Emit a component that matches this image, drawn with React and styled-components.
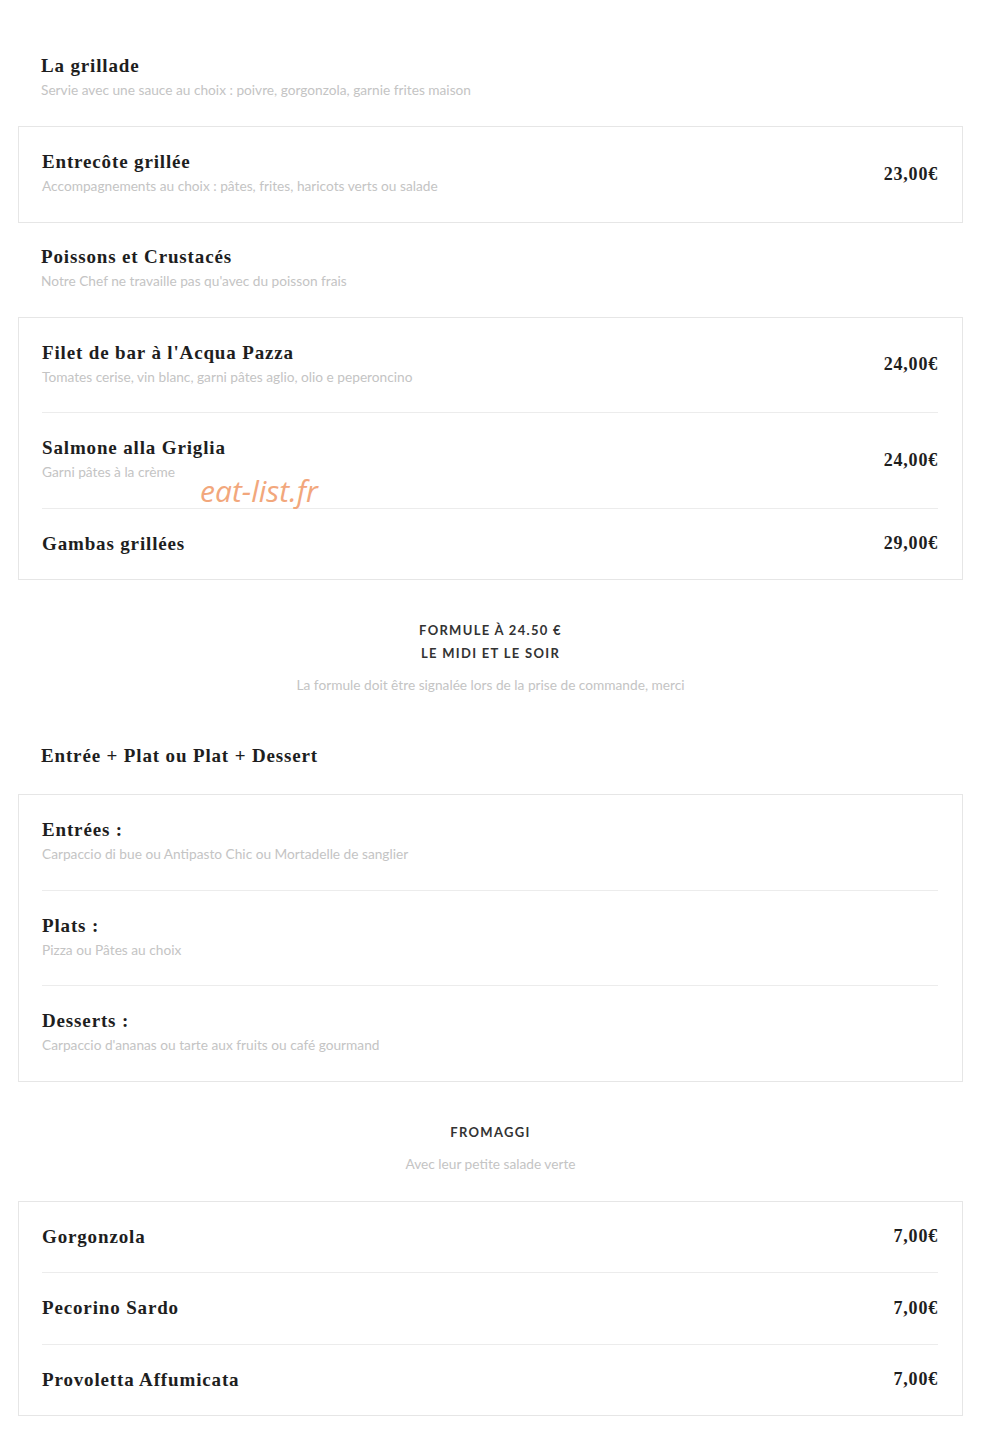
import React from "react";
import styled, { createGlobalStyle } from "styled-components";

const GlobalStyle = createGlobalStyle`
  body {
    margin: 0;
    background: #ffffff;
    font-family: "Lato", "Open Sans", sans-serif;
  }
`;

const Page = styled.div`
  position: relative;
  width: 945px;
  margin: 0 0 0 18px;
  padding: 32px 0 17px;
`;

const SectionHead = styled.div`
  padding: 22px 23px ${(p) => (p.$last ? "26px" : "24px")};
`;

const Title = styled.h3`
  margin: 0;
  font-family: "Liberation Serif", "DejaVu Serif", serif;
  font-weight: 700;
  font-size: 19px;
  line-height: 24px;
  letter-spacing: 0.85px;
  color: #1e1e1e;
`;

const Desc = styled.p`
  margin: 0;
  font-family: "Lato", "Open Sans", sans-serif;
  font-weight: 400;
  font-size: 13.7px;
  line-height: 24px;
  color: #c4c4c4;
`;

const Card = styled.div`
  background: #ffffff;
  border: 1px solid #e6e6e6;
  padding: 0 24px 0 23px;
`;

const Row = styled.div`
  display: flex;
  align-items: center;
  justify-content: space-between;
  padding: 23.25px 0;
  & + & {
    border-top: 1px solid #ececec;
  }
`;

const Price = styled.span`
  font-family: "Liberation Serif", "DejaVu Serif", serif;
  font-weight: 700;
  font-size: 18px;
  letter-spacing: 0.8px;
  color: #1e1e1e;
`;

const Banner = styled.div`
  text-align: center;
  padding: 39px 0 25px;
`;

const BannerLine = styled.div`
  font-family: "Lato", "Open Sans", sans-serif;
  font-weight: 700;
  font-size: 13px;
  line-height: 23px;
  letter-spacing: 1.3px;
  color: #333333;
`;

const BannerNote = styled(Desc)`
  margin-top: 8px;
`;

const Watermark = styled.span`
  position: absolute;
  left: 182px;
  top: 470px;
  font-family: "Open Sans", sans-serif;
  font-style: italic;
  font-size: 30px;
  color: #f2a77c;
`;

function Item({ name, desc, price }) {
  return (
    <Row>
      <div>
        <Title>{name}</Title>
        {desc && <Desc>{desc}</Desc>}
      </div>
      {price && <Price>{price}</Price>}
    </Row>
  );
}

function Head({ title, desc }) {
  return (
    <SectionHead $last={!desc}>
      <Title>{title}</Title>
      {desc && <Desc>{desc}</Desc>}
    </SectionHead>
  );
}

export default function App() {
  return (
    <>
      <GlobalStyle />
      <Page>
        <Head
          title="La grillade"
          desc="Servie avec une sauce au choix : poivre, gorgonzola, garnie frites maison"
        />
        <Card>
          <Item
            name="Entrecôte grillée"
            desc="Accompagnements au choix : pâtes, frites, haricots verts ou salade"
            price="23,00€"
          />
        </Card>

        <Head
          title="Poissons et Crustacés"
          desc="Notre Chef ne travaille pas qu'avec du poisson frais"
        />
        <Card>
          <Item
            name="Filet de bar à l'Acqua Pazza"
            desc="Tomates cerise, vin blanc, garni pâtes aglio, olio e peperoncino"
            price="24,00€"
          />
          <Item
            name="Salmone alla Griglia"
            desc="Garni pâtes à la crème"
            price="24,00€"
          />
          <Item name="Gambas grillées" price="29,00€" />
        </Card>

        <Banner>
          <BannerLine>FORMULE À 24.50 €</BannerLine>
          <BannerLine>LE MIDI ET LE SOIR</BannerLine>
          <BannerNote>
            La formule doit être signalée lors de la prise de commande, merci
          </BannerNote>
        </Banner>

        <Head title="Entrée + Plat ou Plat + Dessert" />
        <Card>
          <Item
            name="Entrées :"
            desc="Carpaccio di bue ou Antipasto Chic ou Mortadelle de sanglier"
          />
          <Item name="Plats :" desc="Pizza ou Pâtes au choix" />
          <Item
            name="Desserts :"
            desc="Carpaccio d'ananas ou tarte aux fruits ou café gourmand"
          />
        </Card>

        <Banner>
          <BannerLine>FROMAGGI</BannerLine>
          <BannerNote>Avec leur petite salade verte</BannerNote>
        </Banner>

        <Card>
          <Item name="Gorgonzola" price="7,00€" />
          <Item name="Pecorino Sardo" price="7,00€" />
          <Item name="Provoletta Affumicata" price="7,00€" />
        </Card>

        <Watermark>eat-list.fr</Watermark>
      </Page>
    </>
  );
}
